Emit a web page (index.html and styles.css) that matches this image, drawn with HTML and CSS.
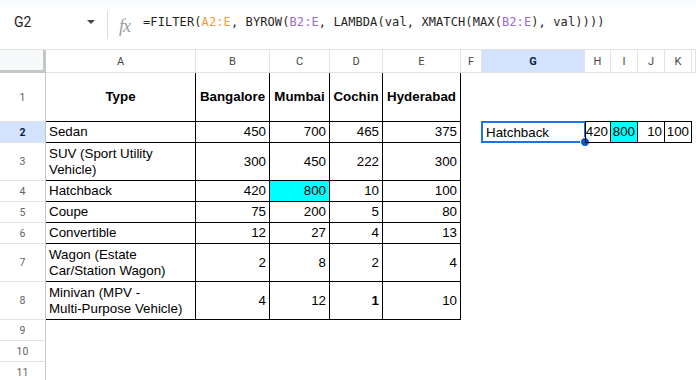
FILE: index.html
```html
<!DOCTYPE html>
<html>
<head>
<meta charset="utf-8">
<link rel="stylesheet" href="styles.css">
</head>
<body>
<div class="strip"></div>
<div class="fbar">
  <div class="namebox"><span class="ref">G2</span><span class="tri"></span></div>
  <div class="sep"></div>
  <div class="fx">fx</div>
  <div class="formula">=FILTER(<span class="o">A2:E</span>, BYROW(<span class="p">B2:E</span>, LAMBDA(val, XMATCH(MAX(<span class="p">B2:E</span>), val))))</div>
</div>
<div class="sheet">
  <div class="colhdr">
    <div class="corner"></div>
    <div class="ch ca">A</div><div class="ch cb">B</div><div class="ch cc">C</div><div class="ch cd">D</div><div class="ch ce">E</div><div class="ch cf">F</div><div class="ch cg sel">G</div><div class="ch chh">H</div><div class="ch ci">I</div><div class="ch cj">J</div><div class="ch ck">K</div><div class="ch cl"></div>
  </div>
  <div class="row r1">
    <div class="rh">1</div>
    <div class="c t ca hd">Type</div><div class="c t cb hd">Bangalore</div><div class="c t cc hd">Mumbai</div><div class="c t cd hd">Cochin</div><div class="c t ce hd">Hyderabad</div>
  </div>
  <div class="row">
    <div class="rh selr">2</div>
    <div class="c t ca">Sedan</div><div class="c t cb n">450</div><div class="c t cc n">700</div><div class="c t cd n">465</div><div class="c t ce n">375</div>
    <div class="c cf"></div>
    <div class="c cg active">Hatchback<div class="selbox"><span class="handle"></span></div></div>
    <div class="c t sp chh n">420</div><div class="c t sp ci n cyan">800</div><div class="c t sp cj n">10</div><div class="c t sp ck n">100</div>
  </div>
  <div class="row tall">
    <div class="rh">3</div>
    <div class="c t ca">SUV (Sport Utility Vehicle)</div><div class="c t cb n">300</div><div class="c t cc n">450</div><div class="c t cd n">222</div><div class="c t ce n">300</div>
  </div>
  <div class="row">
    <div class="rh">4</div>
    <div class="c t ca">Hatchback</div><div class="c t cb n">420</div><div class="c t cc n cyan">800</div><div class="c t cd n">10</div><div class="c t ce n">100</div>
  </div>
  <div class="row">
    <div class="rh">5</div>
    <div class="c t ca">Coupe</div><div class="c t cb n">75</div><div class="c t cc n">200</div><div class="c t cd n">5</div><div class="c t ce n">80</div>
  </div>
  <div class="row">
    <div class="rh">6</div>
    <div class="c t ca">Convertible</div><div class="c t cb n">12</div><div class="c t cc n">27</div><div class="c t cd n">4</div><div class="c t ce n">13</div>
  </div>
  <div class="row tall">
    <div class="rh">7</div>
    <div class="c t ca">Wagon (Estate Car/Station Wagon)</div><div class="c t cb n">2</div><div class="c t cc n">8</div><div class="c t cd n">2</div><div class="c t ce n">4</div>
  </div>
  <div class="row tall">
    <div class="rh">8</div>
    <div class="c t ca"><span>Minivan (MPV -<br>Multi-Purpose Vehicle)</span></div><div class="c t cb n">4</div><div class="c t cc n">12</div><div class="c t cd n b">1</div><div class="c t ce n">10</div>
  </div>
  <div class="row"><div class="rh">9</div></div>
  <div class="row"><div class="rh">10</div></div>
  <div class="row"><div class="rh">11</div></div>
</div>
</body>
</html>
```
FILE: styles.css
```css
html, body {
  margin: 0;
  padding: 0;
  background: #ffffff;
  overflow: hidden;
}
body {
  width: 696px;
  height: 380px;
  font-family: "Liberation Sans", Arial, sans-serif;
}
.strip {
  height: 7px;
  background: #f9fbfd;
}
.fbar {
  height: 42px;
  display: flex;
  align-items: center;
  background: #fff;
}
.namebox {
  width: 107px;
  display: flex;
  align-items: center;
  padding-left: 14px;
  box-sizing: border-box;
  height: 30px;
  margin-top: -12px;
}
.ref {
  font-family: Roboto, "Liberation Sans", sans-serif;
  font-size: 14px;
  color: #1f1f1f;
  width: 73px;
}
.tri {
  width: 0;
  height: 0;
  border-left: 4px solid transparent;
  border-right: 4px solid transparent;
  border-top: 4px solid #444746;
}
.sep {
  width: 1px;
  height: 28px;
  background: #dadce0;
  margin-top: -7px;
}
.fx {
  font-family: "Liberation Serif", serif;
  font-style: italic;
  font-size: 18px;
  color: #9a9da0;
  margin-left: 11px;
  width: 24px;
  margin-top: -3px;
  letter-spacing: -1px;
}
.formula {
  font-family: "DejaVu Sans Mono", "Liberation Mono", monospace;
  font-size: 12px;
  letter-spacing: 0.1px;
  color: #1f1f1f;
  margin-top: -13px;
  white-space: nowrap;
}
.o { color: #f29d38; }
.p { color: #9b6bcc; }

.sheet {
  display: flex;
  flex-direction: column;
}
.colhdr {
  display: flex;
  height: 24px;
  border-top: 1px solid #e1e3e1;
  border-bottom: 1px solid #e1e3e1;
  box-sizing: border-box;
}
.corner {
  width: 46px;
  flex: none;
  box-sizing: border-box;
  background: #f8f9fa;
  border-right: 3px solid #c4c7c5;
  border-bottom: 3px solid #c4c7c5;
  height: 23px;
}
.ch {
  box-sizing: border-box;
  flex: none;
  display: flex;
  align-items: center;
  justify-content: center;
  border-right: 1px solid #e1e3e1;
  font-family: Roboto, "Liberation Sans", sans-serif;
  font-size: 11px;
  color: #444746;
}
.ch.sel {
  background: #d3e3fd;
  color: #041e49;
  font-weight: 700;
}
.cl { flex: 1; }

.ca { width: 150px; }
.cb { width: 74px; }
.cc { width: 60px; }
.cd { width: 53px; }
.ce { width: 78px; }
.cf { width: 21px; }
.cg { width: 103px; }
.chh { width: 26px; }
.ci { width: 27px; }
.cj { width: 27px; }
.ck { width: 27px; }

.row {
  display: flex;
  height: 21px;
}
.row.r1 { height: 49px; }
.row.tall { height: 38px; }
.rh {
  width: 46px;
  flex: none;
  box-sizing: border-box;
  border-right: 1px solid #c4c7c5;
  border-bottom: 1px solid #e1e3e1;
  display: flex;
  align-items: center;
  justify-content: center;
  font-family: Roboto, "Liberation Sans", sans-serif;
  font-size: 10.5px;
  color: #5f6368;
}
.rh.selr {
  background: #d3e3fd;
  color: #041e49;
  font-weight: 700;
}
.c {
  flex: none;
  box-sizing: border-box;
  display: flex;
  align-items: center;
  padding: 0 3px;
  font-size: 13.33px;
  line-height: 16px;
  color: #000;
  position: relative;
}
.t {
  border-right: 1px solid #000;
  border-bottom: 1px solid #000;
}
.hd {
  font-weight: 700;
  justify-content: center;
  text-align: center;
  padding: 0;
}
.n { justify-content: flex-end; }
.b { font-weight: 700; }
.cyan { background: #00ffff; }
.sp {
  border-top: 1px solid #000;
  height: 22px;
  margin-top: -1px;
  padding: 0 2px;
  white-space: nowrap;
}
.chh { border-left: 1px solid #000; }
.colhdr .chh { border-left: none; }
.active { padding-left: 4px; }
.selbox {
  position: absolute;
  left: -1px;
  top: -1px;
  right: -1px;
  bottom: 0;
  border: 2px solid #1a73e8;
}
.handle {
  position: absolute;
  right: -6px;
  bottom: -6px;
  width: 8px;
  height: 8px;
  border-radius: 50%;
  background: #0b57d0;
  border: 1px solid #fff;
}
```
